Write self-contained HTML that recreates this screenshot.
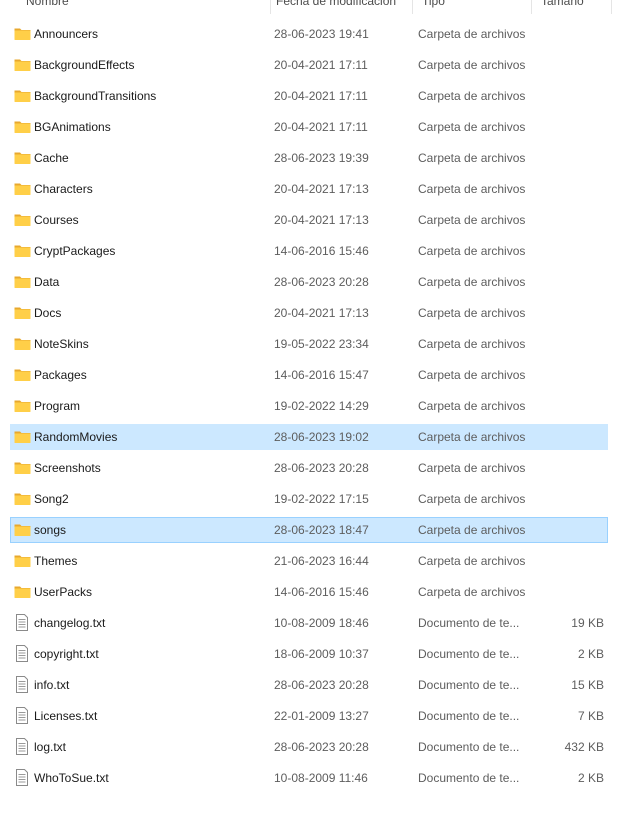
<!DOCTYPE html>
<html><head><meta charset="utf-8"><style>
body{margin:0;width:633px;height:824px;background:#fff;font-family:"Liberation Sans",sans-serif;font-size:12px;position:relative;overflow:hidden}
.h{position:absolute;top:-6px;color:#4c4c4c;font-size:12px}
.sep{position:absolute;top:0;height:14px;width:1px;background:#e5e5e5}
.r{position:absolute;left:10px;width:598px;height:26px}
.sel{background:#cce8ff}
.sel2{background:#cce8ff;box-shadow:inset 0 0 0 1px #99d1ff}
.t{position:absolute;top:0;line-height:26px;white-space:nowrap}
.n{left:24px;color:#1a1a1a}
.d{left:264px;color:#5d5d5d}
.ty{left:408px;color:#5d5d5d}
.s{right:4px;color:#5d5d5d}
.ic{position:absolute;left:4px;top:5px}
</style></head><body>
<div class="h" style="left:26px">Nombre</div>
<div class="h" style="left:276px">Fecha de modificación</div>
<div class="h" style="left:422px">Tipo</div>
<div class="h" style="left:541px">Tamaño</div>
<div class="sep" style="left:270px"></div><div class="sep" style="left:412px"></div><div class="sep" style="left:531px"></div><div class="sep" style="left:611px"></div>
<div id="list"></div>
<script>
var F=[["Announcers","28-06-2023 19:41"],["BackgroundEffects","20-04-2021 17:11"],["BackgroundTransitions","20-04-2021 17:11"],["BGAnimations","20-04-2021 17:11"],["Cache","28-06-2023 19:39"],["Characters","20-04-2021 17:13"],["Courses","20-04-2021 17:13"],["CryptPackages","14-06-2016 15:46"],["Data","28-06-2023 20:28"],["Docs","20-04-2021 17:13"],["NoteSkins","19-05-2022 23:34"],["Packages","14-06-2016 15:47"],["Program","19-02-2022 14:29"],["RandomMovies","28-06-2023 19:02"],["Screenshots","28-06-2023 20:28"],["Song2","19-02-2022 17:15"],["songs","28-06-2023 18:47"],["Themes","21-06-2023 16:44"],["UserPacks","14-06-2016 15:46"]];
var T=[["changelog.txt","10-08-2009 18:46","19 KB"],["copyright.txt","18-06-2009 10:37","2 KB"],["info.txt","28-06-2023 20:28","15 KB"],["Licenses.txt","22-01-2009 13:27","7 KB"],["log.txt","28-06-2023 20:28","432 KB"],["WhoToSue.txt","10-08-2009 11:46","2 KB"]];
var fold='<svg class="ic" width="17" height="15" viewBox="0 0 17 15"><path d="M0.5 2.5h5.5l1.5 1.5h9v9.5h-16z" fill="#e8a82e"/><rect x="0.5" y="4.5" width="16" height="9.5" rx="0.5" fill="#ffcf48"/></svg>';
var txt='<svg class="ic" width="14" height="17" viewBox="0 0 14 17" style="left:5px;top:4px"><path d="M1.5 0.5h8l3 3v13h-11z" fill="#fff" stroke="#8a8a8a"/><path d="M3.5 5.5h7M3.5 8h7M3.5 10.5h7M3.5 13h7" stroke="#9a9a9a"/></svg>';
var h='';
F.forEach(function(f,i){var y=21+31*i;var c=i==13?' sel':i==16?' sel2':'';
h+='<div class="r'+c+'" style="top:'+y+'px">'+fold+'<div class="t n">'+f[0]+'</div><div class="t d">'+f[1]+'</div><div class="t ty">Carpeta de archivos</div></div>';});
T.forEach(function(f,j){var y=21+31*(19+j);
h+='<div class="r" style="top:'+y+'px">'+txt+'<div class="t n">'+f[0]+'</div><div class="t d">'+f[1]+'</div><div class="t ty">Documento de te...</div><div class="t s">'+f[2]+'</div></div>';});
document.getElementById('list').innerHTML=h;
</script>
</body></html>
